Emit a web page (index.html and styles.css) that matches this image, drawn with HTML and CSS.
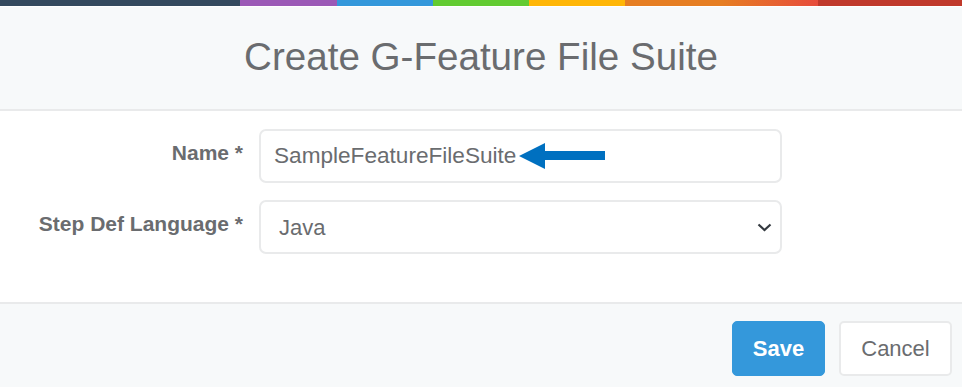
FILE: index.html
```html
<!DOCTYPE html>
<html lang="en">
<head>
  <meta charset="UTF-8">
  <meta name="viewport" content="width=device-width, initial-scale=1.0">
  <title>Create G-Feature File Suite</title>
  <link rel="stylesheet" href="styles.css">
</head>
<body>
  <div class="modal">
    <div class="color-line"></div>
    <div class="modal-header">
      <h4 class="modal-title">Create G-Feature File Suite</h4>
    </div>

    <form class="modal-body">
      <div class="form-row">
        <label for="suiteName">Name *</label>
        <div class="field">
          <input type="text" id="suiteName" value="SampleFeatureFileSuite" />
          <svg class="pointer" width="88" height="26" viewBox="0 0 88 26">
            <polygon points="0,13 26,0 26,8 86,8 86,17 26,17 26,26" fill="#0070c0" />
          </svg>
        </div>
      </div>
      <div class="form-row">
        <label for="stepLang">Step Def Language *</label>
        <div class="field select-wrap">
          <select id="stepLang">
            <option>Java</option>
            <option>C#</option>
            <option>JavaScript</option>
          </select>
          <svg class="chevron" width="15" height="9" viewBox="0 0 15 9">
            <path d="M1.5 1.5 L7.5 7 L13.5 1.5" fill="none" stroke="#343a40" stroke-width="2.2" />
          </svg>
        </div>
      </div>
    </form>

    <div class="modal-footer">
      <button type="button" class="btn btn-primary">Save</button>
      <button type="button" class="btn btn-default">Cancel</button>
    </div>
  </div>
</body>
</html>
```

FILE: styles.css
```css
body {
  margin: 0;
  padding: 0;
  font-family: "Liberation Sans", Arial, sans-serif;
  color: #6a6c6f;
  background: #fff;
}
.modal {
  width: 962px;
  height: 387px;
  display: flex;
  flex-direction: column;
  overflow: hidden;
}
.color-line {
  height: 6px;
  border-bottom: 1px solid #fff;
  background-image: linear-gradient(to right,
    #34495e, #34495e 25%,
    #9b59b6 25%, #9b59b6 35%,
    #3498db 35%, #3498db 45%,
    #62cb31 45%, #62cb31 55%,
    #ffb606 55%, #ffb606 65%,
    #e67e22 65%, #e67e22 75%,
    #e74c3c 85%, #c0392b 85%, #c0392b 100%);
}
.modal-header {
  height: 102px;
  background: #f7f9fa;
  border-bottom: 2px solid #e9eaeb;
  display: flex;
  align-items: center;
  justify-content: center;
}
.modal-title {
  margin: 0;
  font-size: 38.6px;
  font-weight: normal;
  color: #6a6c6f;
  padding-bottom: 2px;
}
.modal-body {
  margin: 0;
  padding: 18px 0 0;
  height: 191px;
  box-sizing: border-box;
}
.form-row {
  display: grid;
  grid-template-columns: 243px 523px;
  column-gap: 16px;
  align-items: center;
  margin-bottom: 17px;
}
.form-row label {
  text-align: right;
  font-weight: bold;
  font-size: 21px;
  color: #6a6c6f;
  padding-bottom: 6px;
}
.field {
  position: relative;
}
input, select {
  display: block;
  width: 100%;
  height: 54px;
  box-sizing: border-box;
  border: 2px solid #e9eaeb;
  border-radius: 7px;
  background: #fff;
  font-family: "Liberation Sans", Arial, sans-serif;
  font-size: 22.6px;
  color: #6a6c6f;
  padding: 0 13px;
  outline: none;
}
select {
  appearance: none;
  -webkit-appearance: none;
  padding-left: 18px;
  font-size: 22px;
}
.pointer {
  position: absolute;
  left: 260px;
  top: 14px;
}
.chevron {
  position: absolute;
  right: 10px;
  top: 23px;
  pointer-events: none;
}
.modal-footer {
  flex: 1;
  background: #f7f9fa;
  border-top: 2px solid #e9eaeb;
  display: flex;
  justify-content: flex-end;
  align-items: flex-start;
  gap: 14px;
  padding: 17px 10px 0 0;
}
.btn {
  height: 55px;
  border-radius: 5px;
  font-family: "Liberation Sans", Arial, sans-serif;
  font-size: 22px;
  cursor: pointer;
}
.btn-primary {
  width: 93px;
  background: #3498db;
  border: 1px solid #3498db;
  color: #fff;
  font-weight: bold;
}
.btn-default {
  width: 113px;
  background: #fff;
  border: 2px solid #e9eaeb;
  color: #6a6c6f;
}
```
